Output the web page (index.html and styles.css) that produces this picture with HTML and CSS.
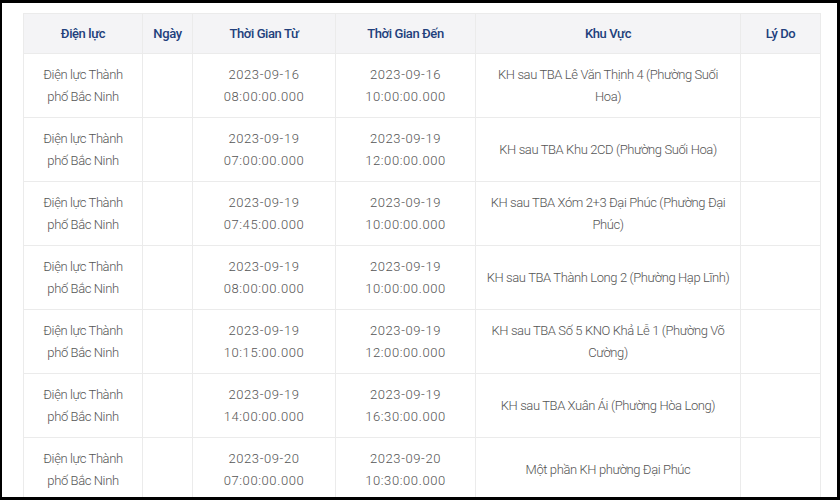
FILE: index.html
```html
<!DOCTYPE html>
<html lang="vi">
<head>
<meta charset="utf-8">
<link rel="stylesheet" href="styles.css">
</head>
<body>
<div class="frame">
  <table class="outage">
    <colgroup>
      <col class="c1"><col class="c2"><col class="c3"><col class="c4"><col class="c5"><col class="c6">
    </colgroup>
    <thead>
      <tr><th>Điện lực</th><th>Ngày</th><th>Thời Gian Từ</th><th>Thời Gian Đến</th><th>Khu Vực</th><th>Lý Do</th></tr>
    </thead>
    <tbody>
      <tr><td>Điện lực Thành phố Bắc Ninh</td><td></td><td class="time">2023-09-16 08:00:00.000</td><td class="time">2023-09-16 10:00:00.000</td><td class="area">KH sau TBA Lê Văn Thịnh 4 (Phường Suối Hoa)</td><td></td></tr>
      <tr><td>Điện lực Thành phố Bắc Ninh</td><td></td><td class="time">2023-09-19 07:00:00.000</td><td class="time">2023-09-19 12:00:00.000</td><td class="area">KH sau TBA Khu 2CD (Phường Suối Hoa)</td><td></td></tr>
      <tr><td>Điện lực Thành phố Bắc Ninh</td><td></td><td class="time">2023-09-19 07:45:00.000</td><td class="time">2023-09-19 10:00:00.000</td><td class="area">KH sau TBA Xóm 2+3 Đại Phúc (Phường Đại Phúc)</td><td></td></tr>
      <tr><td>Điện lực Thành phố Bắc Ninh</td><td></td><td class="time">2023-09-19 08:00:00.000</td><td class="time">2023-09-19 10:00:00.000</td><td class="area">KH sau TBA Thành Long 2 (Phường Hạp Lĩnh)</td><td></td></tr>
      <tr><td>Điện lực Thành phố Bắc Ninh</td><td></td><td class="time">2023-09-19 10:15:00.000</td><td class="time">2023-09-19 12:00:00.000</td><td class="area">KH sau TBA Số 5 KNO Khả Lễ 1 (Phường Võ Cường)</td><td></td></tr>
      <tr><td>Điện lực Thành phố Bắc Ninh</td><td></td><td class="time">2023-09-19 14:00:00.000</td><td class="time">2023-09-19 16:30:00.000</td><td class="area">KH sau TBA Xuân Ái (Phường Hòa Long)</td><td></td></tr>
      <tr><td>Điện lực Thành phố Bắc Ninh</td><td></td><td class="time">2023-09-20 07:00:00.000</td><td class="time">2023-09-20 10:30:00.000</td><td class="area">Một phần KH phường Đại Phúc</td><td></td></tr>
    </tbody>
  </table>
</div>
</body>
</html>
```
FILE: styles.css
```css
html, body {
  margin: 0;
  padding: 0;
  background: #000;
}
.frame {
  box-sizing: border-box;
  width: 840px;
  height: 500px;
  background: #fff;
  border-style: solid;
  border-color: #000;
  border-width: 3px 3px 3px 2px;
  padding: 10px 0 0 21px;
  overflow: hidden;
}
.outage {
  border-collapse: collapse;
  table-layout: fixed;
  width: 797px;
  font-family: Roboto, "Noto Sans", sans-serif;
  font-size: 13px;
  line-height: 22px;
  letter-spacing: -0.4px;
}
.c1 { width: 119px; }
.c2 { width: 50px; }
.c3 { width: 143px; }
.c4 { width: 140px; }
.c5 { width: 265px; }
.c6 { width: 80px; }
.outage th,
.outage td {
  border: 1px solid #ebebeb;
  text-align: center;
  vertical-align: middle;
}
.outage th {
  background: #f4f4f6;
  color: #22407c;
  font-weight: 500;
  height: 39px;
  padding: 0 6px;
}
.outage td {
  color: #555;
  font-weight: 300;
  height: 63px;
  padding: 0 12px;
}
.outage td.time {
  letter-spacing: 0.6px;
  padding: 0 6px;
}
.outage td.area {
  padding: 0 9px;
}
```
